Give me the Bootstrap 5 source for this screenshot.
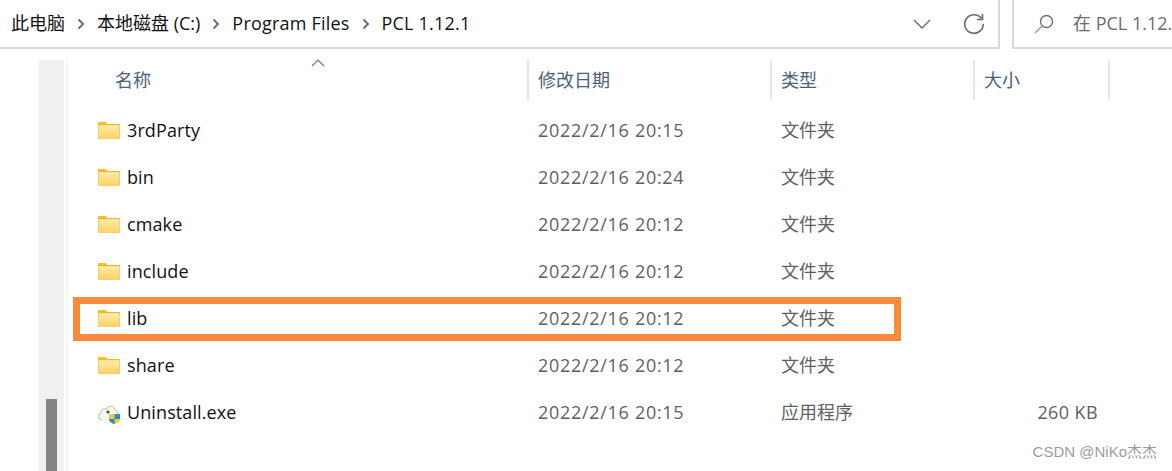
<!DOCTYPE html>
<html lang="zh-CN">
<head>
  <meta charset="UTF-8" />
  <meta name="viewport" content="width=device-width, initial-scale=1" />
  <title>PCL 1.12.1</title>
  <link href="https://cdn.jsdelivr.net/npm/bootstrap@5.3.3/dist/css/bootstrap.min.css" rel="stylesheet" />
  <style>
    html, body { height: 471px; overflow: hidden; }
    body { font-family: "Open Sans", "Noto Sans CJK SC", sans-serif; font-size: 18px; color: #111; background: #fff; position: relative; }
    .top-strip { height: 49px; }
    .addr-box { width: 1000px; padding-left: 11px; border-right: 2px solid #d9d9d9; border-bottom: 2px solid #d9d9d9; }
    .search-box { margin-left: 12px; flex: 1; padding-left: 20px; border-left: 2px solid #d9d9d9; border-bottom: 2px solid #d9d9d9; color: #6d6d6d; white-space: nowrap; overflow: hidden; }
    .search-glass { margin-right: 19px; }
    .crumb-sep { width: 8px; height: 12px; margin: 0 12px; flex: none; }
    .crumb-wide { letter-spacing: .2px; }
    .addr-tools { margin-left: auto; margin-right: 13px; gap: 32px; }
    .main-area { height: 422px; padding-top: 11px; }
    .side-gutter { width: 29px; margin-left: 39px; flex: none; display: flex; }
    .gutter-track { width: 25px; background: #f0f0f0; position: relative; }
    .gutter-thumb { position: absolute; left: 7px; width: 11px; top: 339px; bottom: 0; background: #858585; }
    .gutter-line { width: 2px; margin-left: 2px; background: #f5f5f5; }
    .file-list { flex: 1; min-width: 0; }
    .head-row { height: 40px; color: #4c607a; position: relative; }
    .head-cell { height: 40px; display: flex; align-items: center; padding-left: 9px; border-right: 2px solid #e6e6e6; }
    .sort-caret { position: absolute; left: 243px; top: -1px; width: 14px; height: 8px; }
    .name-col { width: 461px; flex: none; }
    .date-col { width: 243px; flex: none; }
    .type-col { width: 203px; flex: none; }
    .size-col { width: 135px; flex: none; }
    .head-row .name-col { padding-left: 47px; }
    .file-row { height: 47px; position: relative; }
    .file-row .date-col, .file-row .type-col { padding-left: 9px; color: #5f5f5f; }
    .file-row .date-col { letter-spacing: .7px; }
    .file-row .size-col { color: #5f5f5f; text-align: right; padding-right: 12px; letter-spacing: .4px; }
    .rows-wrap { padding-top: 7px; }
    .file-row .name-col { display: flex; align-items: center; padding-left: 30px; gap: 6px; letter-spacing: .1px; }
    .file-row .icon-svg { width: 23px; height: 20px; flex: none; overflow: visible; }
    .pick-frame { position: absolute; left: 73px; top: 297px; width: 828px; height: 44px; border: 7px solid #f98a3c; pointer-events: none; }
    .mark-text { position: absolute; right: 15px; bottom: 8px; font-family: "Liberation Sans", "Noto Sans CJK SC", sans-serif; font-size: 15px; color: #9b9b9b; }
  </style>
</head>
<body>
  <svg width="0" height="0" class="position-absolute">
    <defs>
      <linearGradient id="folderFill" x1="0" y1="0" x2="0" y2="1">
        <stop offset="0" stop-color="#ffeeb0" />
        <stop offset="1" stop-color="#fdd261" />
      </linearGradient>
      <symbol id="folderIcon" viewBox="0 0 23 20">
        <path d="M0 1h7.500l2.500 2.500H0z" fill="#fbbf24" />
        <rect x="0.500" y="3.500" width="21" height="14" fill="url(#folderFill)" stroke="#f2cf70" stroke-width="1" />
        <rect x="0" y="3" width="22" height="1.200" fill="#f2b632" />
      </symbol>
      <symbol id="sepIcon" viewBox="0 0 8 12">
        <path d="M1.500 1.500 6 6l-4.500 4.500" fill="none" stroke="#6e6e6e" stroke-width="2" />
      </symbol>
    </defs>
  </svg>

  <div class="top-strip d-flex">
    <div class="addr-box d-flex align-items-center">
      <span>此电脑</span>
      <svg class="crumb-sep"><use href="#sepIcon" /></svg>
      <span>本地磁盘 (C:)</span>
      <svg class="crumb-sep"><use href="#sepIcon" /></svg>
      <span class="crumb-wide">Program Files</span>
      <svg class="crumb-sep"><use href="#sepIcon" /></svg>
      <span class="crumb-wide">PCL 1.12.1</span>
      <div class="addr-tools d-flex align-items-center">
        <svg width="18" height="10" viewBox="0 0 18 10"><path d="M1 1l8 8 8-8" fill="none" stroke="#6a6a6a" stroke-width="1.400" /></svg>
        <svg width="22" height="22" viewBox="0 0 22 22"><path d="M18.500 5.500A9.300 9.300 0 1 0 20.300 11" fill="none" stroke="#6a6a6a" stroke-width="1.600" /><path d="M19.500 1v5.500H14" fill="none" stroke="#6a6a6a" stroke-width="1.600" /></svg>
      </div>
    </div>
    <div class="search-box d-flex align-items-center">
      <svg class="search-glass flex-shrink-0" width="20" height="20" viewBox="0 0 20 20"><circle cx="12.500" cy="7.500" r="6" fill="none" stroke="#707070" stroke-width="1.400" /><path d="M8 12 1 19" stroke="#c79a78" stroke-width="1.600" /></svg>
      <span>在 PCL 1.12.</span>
    </div>
  </div>

  <div class="main-area d-flex">
    <div class="side-gutter">
      <div class="gutter-track"><div class="gutter-thumb"></div></div>
      <div class="gutter-line"></div>
    </div>
    <div class="file-list">
      <div class="head-row d-flex">
        <svg class="sort-caret" viewBox="0 0 14 8"><path d="M1 7l6-6 6 6" fill="none" stroke="#777" stroke-width="1.200" /></svg>
        <div class="head-cell name-col">名称</div>
        <div class="head-cell date-col">修改日期</div>
        <div class="head-cell type-col">类型</div>
        <div class="head-cell size-col">大小</div>
      </div>
      <div class="rows-wrap" id="rows"></div>
    </div>
  </div>

  <div class="pick-frame"></div>
  <div class="mark-text">CSDN @NiKo杰杰</div>

  <script>
    const arquivos = [
      ['3rdParty', '2022/2/16 20:15', '文件夹', ''],
      ['bin', '2022/2/16 20:24', '文件夹', ''],
      ['cmake', '2022/2/16 20:12', '文件夹', ''],
      ['include', '2022/2/16 20:12', '文件夹', ''],
      ['lib', '2022/2/16 20:12', '文件夹', ''],
      ['share', '2022/2/16 20:12', '文件夹', ''],
      ['Uninstall.exe', '2022/2/16 20:15', '应用程序', '260 KB']
    ];
    const iconeExe = '<svg class="icon-svg" viewBox="0 0 23 20">' +
      '<path d="M4 17C0 17 0 11 3 10 3 6 7 5 8.500 6.500 10 2 16 2 17 7c3 1 4 4 3 6" fill="#fbfdf8" stroke="#b6d39f" stroke-width="1.100" />' +
      '<circle cx="10" cy="9" r="1.600" fill="#444" />' +
      '<path d="M11 11h11v5c0 2.500-2.500 4.500-5.500 5-3-.5-5.500-2.500-5.500-5z" fill="#f7c52c" />' +
      '<path d="M11 16h5.500v5c-3-.5-5.500-2.500-5.500-5zM16.500 11H22v5h-5.500z" fill="#1f8fd8" />' +
      '</svg>';
    const iconePasta = '<svg class="icon-svg"><use href="#folderIcon" /></svg>';
    document.getElementById('rows').innerHTML = arquivos.map(a => `
      <div class="file-row d-flex align-items-center">
        <div class="name-col">${a[0].endsWith('.exe') ? iconeExe : iconePasta}<span>${a[0]}</span></div>
        <div class="date-col">${a[1]}</div>
        <div class="type-col">${a[2]}</div>
        <div class="size-col">${a[3]}</div>
      </div>`).join('');
  </script>
  <script src="https://cdn.jsdelivr.net/npm/bootstrap@5.3.3/dist/js/bootstrap.bundle.min.js"></script>
</body>
</html>
